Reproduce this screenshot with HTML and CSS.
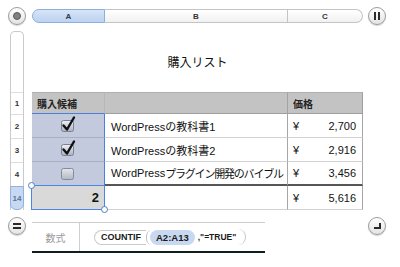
FILE: index.html
```html
<!DOCTYPE html>
<html lang="ja">
<head>
<meta charset="utf-8">
<link rel="stylesheet" href="styles.css">
</head>
<body>
<div class="toprow">
  <div class="round-btn"><span class="dot"></span></div>
  <div class="colheads">
    <div class="ch ch-a">A</div>
    <div class="ch ch-b">B</div>
    <div class="ch ch-c">C</div>
  </div>
  <div class="round-btn pause"><span class="bar"></span><span class="bar"></span></div>
</div>

<div class="main">
  <div class="rowheads">
    <div class="rh-top"></div>
    <div class="rh rh-h">1</div>
    <div class="rh">2</div>
    <div class="rh">3</div>
    <div class="rh">4</div>
    <div class="rh sel">14</div>
  </div>
  <div class="sheet">
    <div class="title">購入リスト</div>
    <div class="table">
      <div class="hd hd-a">購入候補</div>
      <div class="hd hd-b"></div>
      <div class="hd hd-c">価格</div>

      <div class="ca first">
        <svg class="cb" width="18" height="18" viewBox="0 0 18 18"><defs><linearGradient id="g1" x1="0" y1="0" x2="0" y2="1"><stop offset="0" stop-color="#eef0f5"/><stop offset="1" stop-color="#a9b0c0"/></linearGradient></defs><rect x="2.5" y="5.5" width="12" height="11" rx="2" fill="url(#g1)" stroke="#7b8193"/><path d="M4.5 10.5 L8 14.5 L15 2.5" fill="none" stroke="#111" stroke-width="2.4" stroke-linecap="round" stroke-linejoin="round"/></svg>
      </div>
      <div class="cb-text">WordPressの教科書1</div>
      <div class="price"><span>¥</span><span>2,700</span></div>

      <div class="ca">
        <svg class="cb" width="18" height="18" viewBox="0 0 18 18"><defs><linearGradient id="g2" x1="0" y1="0" x2="0" y2="1"><stop offset="0" stop-color="#eef0f5"/><stop offset="1" stop-color="#a9b0c0"/></linearGradient></defs><rect x="2.5" y="5.5" width="12" height="11" rx="2" fill="url(#g2)" stroke="#7b8193"/><path d="M4.5 10.5 L8 14.5 L15 2.5" fill="none" stroke="#111" stroke-width="2.4" stroke-linecap="round" stroke-linejoin="round"/></svg>
      </div>
      <div class="cb-text">WordPressの教科書2</div>
      <div class="price"><span>¥</span><span>2,916</span></div>

      <div class="ca last">
        <svg class="cb" width="18" height="18" viewBox="0 0 18 18"><defs><linearGradient id="g3" x1="0" y1="0" x2="0" y2="1"><stop offset="0" stop-color="#e4e6eb"/><stop offset="1" stop-color="#b3b8c3"/></linearGradient></defs><rect x="2.5" y="5.5" width="12" height="11" rx="2" fill="url(#g3)" stroke="#858a97"/></svg>
      </div>
      <div class="cb-text last">WordPress<span class="tight">プラグイン開発のバイブル</span></div>
      <div class="price last"><span>¥</span><span>3,456</span></div>

      <div class="a14">2<span class="selbox"><span class="handle h-tl"></span><span class="handle h-br"></span></span></div>
      <div class="b14"></div>
      <div class="price c14"><span>¥</span><span>5,616</span></div>
    </div>
  </div>
</div>

<div class="bottomrow">
  <div class="round-btn eq"><span class="eqbar"></span><span class="eqbar"></span></div>
  <div class="formula">
    <div class="flabel">数式</div>
    <div class="tokens">
      <span class="fn">COUNTIF</span><span class="lparen"></span><span class="ref">A2:A13</span><span class="arg">,"=TRUE"</span><span class="rparen"></span>
    </div>
  </div>
  <div class="round-btn corner"><span class="ell"></span></div>
</div>
</body>
</html>
```

FILE: styles.css
```css
* { box-sizing: border-box; margin: 0; padding: 0; }
html, body { width: 400px; height: 267px; background: #fff; overflow: hidden; }
body {
  font-family: "Liberation Sans", "Noto Sans CJK JP", sans-serif;
  color: #111;
  padding: 7px 0 0 8px;
}

/* round buttons */
.round-btn {
  width: 18px; height: 18px; flex: none;
  border-radius: 50%;
  border: 1px solid #9c9c9c;
  background: linear-gradient(#ffffff, #e4e4e4);
  box-shadow: 0 1px 1px rgba(0,0,0,0.18);
  display: flex; align-items: center; justify-content: center;
}
.dot { width: 8px; height: 8px; border-radius: 50%; background: #808080; border: 1px solid #5a5a5a; }
.pause { gap: 2px; }
.bar { width: 2px; height: 8px; background: #2a2a2a; }
.eq { flex-direction: column; gap: 2px; }
.eqbar { width: 8px; height: 2px; background: #2a2a2a; }
.ell { width: 7px; height: 6px; border-right: 2px solid #2a2a2a; border-bottom: 2px solid #2a2a2a; margin: -1px -1px 0 0; }

/* top row */
.toprow { display: flex; align-items: center; height: 18px; }
.colheads {
  display: grid; grid-template-columns: 73px 183px 75px;
  width: 331px; height: 14px; margin: 0 5px 0 6px;
}
.ch {
  display: flex; align-items: center; justify-content: center;
  font-size: 8px; font-weight: bold; color: #333;
  border: 1px solid #c4c4c4; border-left: none;
  background: linear-gradient(#ffffff, #f1f1f1);
}
.ch-a {
  border: 1px solid #8eaedb;
  border-radius: 7px 0 0 7px;
  background: linear-gradient(#d6e5f9, #bcd2f1);
  color: #2a3a55;
}
.ch-c { border-radius: 0 7px 7px 0; }

/* main */
.main { display: flex; margin-top: 6px; height: 179px; }
.rowheads {
  width: 14px; margin: 0 8px 0 2px;
  display: flex; flex-direction: column;
  border: 1px solid #cacaca; border-bottom: none;
  border-radius: 5px 5px 0 0;
}
.rh-top { height: 60px; flex: none; }
.rh {
  height: 24px; flex: none;
  display: flex; align-items: center; justify-content: center;
  font-size: 8px; font-weight: bold; color: #333;
  border-top: 1px solid #dedede;
}
.rh-h { height: 22px; }
.rh.sel {
  height: 24px;
  margin: 0 -1px;
  background: #c7d9f2;
  color: #56759e;
  border: 1px solid #93b2db;
  border-radius: 0 0 6px 6px;
}

.sheet { width: 331px; display: flex; flex-direction: column; }
.title {
  height: 61px; flex: none;
  display: flex; align-items: center; justify-content: center;
  font-size: 12px; color: #111;
}
.table {
  display: grid;
  grid-template-columns: 73px 183px 75px;
  grid-template-rows: 22px 24px 24px 24px 24px;
}
.table > div { display: flex; align-items: center; }

.hd {
  background: #c3c3c3;
  border-top: 1px solid #b0b0b0;
  border-bottom: 1px solid #9e9e9e;
  font-size: 10px; font-weight: bold; color: #222;
  padding-left: 5px;
}
.hd-a { border-bottom-color: #4a80dc; border-right: 1px solid #b8b8b8; }
.hd-b { border-right: 1px solid #a3a3a3; }
.hd-c { border-right: 1px solid #9e9e9e; }

.ca {
  justify-content: center;
  background: #c3cadd;
  border-right: 1px solid #4a80dc;
  border-bottom: 1px solid #a8b0c6;
}
.ca.last { border-bottom: none; }
.cb { display: block; margin-top: -4px; }

.cb-text {
  font-size: 11px; padding-left: 6px;
  border-right: 1px solid #a6a6a6;
  border-bottom: 1px solid #d2d2d2;
  white-space: nowrap; overflow: hidden;
}
.tight { letter-spacing: -1.2px; }
.price {
  justify-content: space-between;
  font-size: 11px; padding: 0 6px 0 5px;
  border-right: 1px solid #a6a6a6;
  border-bottom: 1px solid #d2d2d2;
}
.cb-text.last, .price.last { border-bottom: 2px solid #565656; }

.a14 {
  position: relative;
  justify-content: flex-end;
  padding-right: 5px;
  background: #d9d9d9;
  border-right: 1px solid #444;
  border-bottom: 1px solid #bdbdbd;
  font-size: 13px; font-weight: bold; color: #111;
}
.b14 { border-right: 1px solid #a6a6a6; border-bottom: 1px solid #d2d2d2; }
.c14 { border-bottom: 1px solid #d2d2d2; }

.selbox {
  position: absolute;
  left: -1px; right: -1px; top: -1px; bottom: -1px;
  border: 1px solid #4a84e4;
}
.handle {
  position: absolute;
  width: 7px; height: 7px; border-radius: 50%;
  background: #fff; border: 1px solid #4a7fd0;
}
.h-tl { left: -4px; top: -4px; }
.h-br { right: -4px; bottom: -4px; }

/* bottom */
.bottomrow { display: flex; align-items: flex-start; margin-top: 7px; }
.formula {
  width: 233px; height: 31px;
  margin: 5px 103px 0 6px;
  border-top: 1px solid #cccccc;
  border-bottom: 2px solid #0e1e1e;
  display: flex; align-items: stretch;
}
.flabel {
  width: 48px; flex: none;
  display: flex; align-items: center; justify-content: center;
  font-size: 10px; color: #9a9a9a;
  border-right: 1px solid #cfcfcf;
}
.tokens {
  display: flex; align-items: center;
  padding-left: 14px;
  font-size: 9px; font-weight: bold; color: #1a1a1a;
}
.fn {
  height: 15px; display: flex; align-items: center;
  padding: 0 5px 0 6px;
  border: 1px solid #cacaca; border-right: none;
  border-radius: 8px 0 0 8px;
}
.lparen {
  width: 5px; height: 15px;
  border-left: 1px solid #c0c0c0;
  border-radius: 6px 0 0 6px / 8px 0 0 8px;
}
.ref {
  height: 15px; display: flex; align-items: center;
  padding: 0 6px;
  font-size: 9.5px;
  background: #c8d8f0;
  border-radius: 8px;
  margin-left: -1px;
}
.arg { margin-left: 3px; font-size: 8.5px; }
.rparen {
  width: 9px; height: 16px;
  margin-left: 1px;
  border-right: 1px solid #c4c4c4;
  border-radius: 0 8px 8px 0;
}
```
